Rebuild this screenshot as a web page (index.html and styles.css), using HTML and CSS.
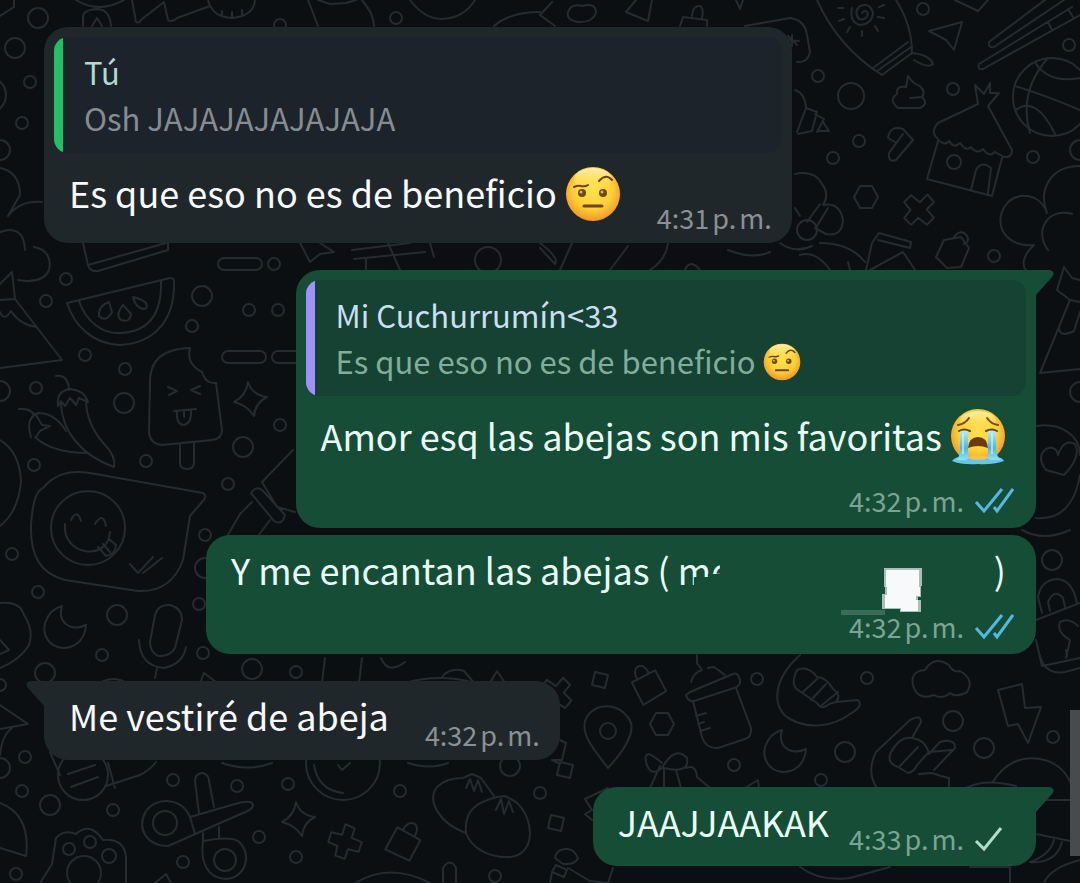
FILE: index.html
```html
<!DOCTYPE html>
<html lang="es">
<head>
    <meta charset="UTF-8">
    <meta name="viewport" content="width=device-width, initial-scale=1.0">
    <title>Chat</title>
    <link rel="stylesheet" href="styles.css">
</head>
<body>
    <svg class="wallpaper" viewBox="0 0 1080 883" preserveAspectRatio="xMidYMin slice" aria-hidden="true">
        <defs>
            <circle id="dot" r="6"/>
            <circle id="ring" r="10"/>
            <path id="star" d="M-2 -17 Q2 -4 17 -2 Q5 4 4 17 Q-3 6 -16 3 Q-4 -3 -2 -17Z"/>
            <path id="hex" d="M-6 -11 H6 L12 0 L6 11 H-6 L-12 0Z"/>
            <path id="cross" d="M-5 -17 L5 -16 L5 -6 L16 -5 L16 5 L5 6 L5 16 L-5 16 L-6 6 L-16 5 L-16 -5 L-5 -6Z"/>
            <path id="moon" d="M-3 -21 C-8 -4 6 5 21 -2 C20 12 11 21 -2 21 C-16 20 -23 8 -20 -4 C-17 -13 -11 -19 -3 -21Z"/>
            <path id="lock" d="M-13 -6 L13 -10 L17 13 L-9 19Z M-7 -7 C-10 -22 5 -24 6 -9"/>
            <path id="diamond" d="M-5 -8 L8 -5 L5 8 L-8 5Z"/>
            <rect id="pill" width="44" height="12" rx="6"/>
        </defs>

        <!-- top edge -->
        <path d="M0 16 L14 7 V0 M76 0 Q98 14 124 0 M83 26 V16 Q84 10 96 9 Q110 9 111 26 M92 26 L97 18 L102 26"/>
        <path d="M132 0 L136 22 Q139 24 142 19 L164 2 L168 20 Q172 23 177 18 L210 6 M208 0 Q212 17 232 18 Q254 16 255 0 M222 16 V11 M232 17 V12 M242 15 V10"/>
        <path d="M308 0 L318 26 M318 0 L330 4 L346 3 L356 0 M362 0 Q374 14 374 26 M410 0 Q424 19 442 19 Q464 18 475 0 M494 26 Q510 12 540 12 M540 15 L555 26 M540 15 L552 2"/>
        <path d="M568 12 Q571 3 582 6 Q596 2 596 13 Q592 23 578 22 Q566 20 568 12Z M626 12 L636 0 M626 12 L648 21 L652 0 M680 26 L683 17 L707 20 V26 M692 16 Q693 5 700 6 Q704 8 702 18 M736 0 L740 9 L743 0"/>
        <path d="M745 26 L790 18 Q805 20 807 35 L810 52 Q808 63 797 62 M792 35 V46 M786 40 L799 41 M788 36 L797 45"/>

        <!-- rocket, plane and chopsticks -->
        <path d="M817 0 Q838 47 882 75 L912 53 Q912 25 896 0 M873 68 L908 42 M877 71 L911 47 M912 53 Q930 55 933 64 Q928 69 914 60"/>
        <path d="M862 13 Q866 8 868 14 Q866 21 859 19 Q853 12 860 6 Q870 2 873 13 Q872 24 860 25 Q849 22 852 8 M862 31 V36 M850 27 L847 32 M844 19 L839 21 M843 8 L838 8 M875 26 L878 31 M878 17 L884 18 M879 7 L884 5"/>
        <path d="M929 31 L962 22 L954 50 L946 40Z M989 42 L1045 0 M994 47 L1064 0 M989 42 Q988 48 994 47 M979 64 L1072 7 M983 69 L1080 15 M979 64 Q977 70 983 69 M1048 22 L1052 30 M1068 9 L1073 17 M955 0 L978 11 L988 0"/>
        <circle cx="1052" cy="97" r="39"/>
        <path d="M1015 86 Q1044 95 1080 110 M1035 62 Q1048 84 1080 78 M1048 58 Q1018 92 1030 133 M1016 110 Q1036 95 1055 134"/>
        <path d="M908 76 Q913 84 920 86 Q926 92 922 97 Q929 104 920 108 H898 Q888 100 897 94 Q896 85 906 87Z M922 97 L910 98"/>

        <!-- hut -->
        <path d="M937 138 Q930 132 938 123 L978 104 L975 85 L984 94 L990 83 L990 93 L999 93 L988 106 L1012 150 Q1012 158 1004 157"/>
        <path d="M937 138 Q944 147 949 141 Q954 149 960 143 Q966 152 971 147 Q977 155 983 149 Q989 158 995 152 L1004 157 M938 141 L927 179 L992 196 L1002 158 M971 190 L976 170 Q982 160 991 168 L988 193"/>
        <circle cx="954" cy="162" r="7"/>

        <path d="M888 138 Q890 125 903 129 L913 140 L896 160 Q888 163 889 153 L903 134 M888 138 L895 142"/>
        <path d="M795 90 Q805 93 806 108 L797 132 M806 108 L817 112 L812 131 L798 134 M815 114 L824 119 L817 132 M823 122 L829 131 L818 131"/>
        <path d="M795 174 Q815 170 822 184 Q830 194 823 205 Q840 202 843 220 Q842 237 826 234 L815 228 M820 204 L807 222 M828 208 L817 226 M795 208 L800 216 M780 243 Q795 254 812 246"/>
        <circle cx="807" cy="230" r="10"/>
        <path d="M866 270 L872 243 L879 233 L911 242 L910 248 L878 240 M870 270 L903 252 L915 270 M820 243 Q850 243 865 262"/>
        <path d="M936 257 L944 240 L961 237 L969 248 L961 267 L947 268Z M954 237 Q961 228 967 236 Q970 242 964 244"/>
        <path d="M1034 245 C1008 248 992 226 1005 206 C1016 190 1040 193 1047 213 M1080 166 C1050 166 1038 190 1047 213 M1072 214 C1049 207 1033 230 1048 250 M1034 245 C1022 256 1022 266 1026 270"/>

        <!-- left column -->
        <path d="M0 168 Q20 172 20 195 L8 216 M42 202 Q20 200 8 216 M0 232 Q24 224 25 250 M34 247 Q53 251 49 270 Q43 284 18 280 M83 243 L88 265 Q90 272 98 271 L168 250 V243 M88 265 L166 243"/>
        <path d="M300 243 L310 262 L320 254 L334 252 L320 243 M352 250 L410 243 M354 259 L425 252 M366 258 V270 M430 243 L434 257 M540 248 L555 264 Q560 258 540 243"/>
        <path d="M0 300 L15 299 L62 360 L0 368 M0 284 L12 272 L15 299 M0 312 Q4 322 11 311 Q20 325 37 327"/>
        <path d="M67 303 L170 278 Q175 277 174 285 C174 320 155 343 120 345 C92 344 74 325 67 303Z M79 301 C86 322 103 334 120 333 C148 332 162 315 161 281"/>
        <path d="M109 302 Q98 306 99 316 Q106 323 112 312Z M123 305 Q115 315 121 320 Q130 323 131 314Z M133 297 Q136 309 145 309 Q152 302 133 297Z"/>
        <path d="M150 385 C149 360 162 349 190 348 Q186 364 202 372 Q205 384 216 383 L222 430 Q222 439 212 440 L162 445 Q150 444 149 432Z M180 445 V463 Q180 469 187 469 Q194 469 194 462 V443"/>
        <path d="M168 387 L177 391 L169 395 M200 386 L191 390 L200 394 M174 411 L196 409 M177 411 Q176 425 184 425 Q192 423 191 410 M184 411 V417"/>
        <path d="M56 376 Q68 374 69 390 M58 406 Q56 391 70 389 Q84 390 88 402 L79 398 L76 405 L70 398 L65 406 L61 401Z M61 404 C62 430 80 455 114 467 Q116 456 105 445 Q86 424 86 400 M19 409 Q31 408 34 415 M31 437 Q25 418 38 413 Q55 413 66 431 M36 415 L42 425 L50 426 L40 431 L36 437 M35 437 Q52 453 88 453"/>
        <path d="M0 440 Q20 452 21 482 Q18 512 0 526"/>
        <path d="M31 525 Q33 492 43 488 C55 474 68 470 90 473 L203 493 Q208 496 202 502 L190 516 L183 560 C175 582 160 592 138 591 L65 580 C42 574 30 558 31 525Z M130 564 L138 573 L153 557 M143 573 L162 558"/>
        <circle cx="88" cy="528" r="37"/>
        <path d="M71 520 Q77 508 81 521 M95 524 Q103 511 106 526 M65 524 C62 556 108 562 110 532 M98 547 L106 556 Q116 554 116 545 L109 539 M103 544 L110 552"/>
        <path d="M293 450 L262 482 L277 507 L295 512 M251 493 Q257 484 264 492 L285 515 Q282 526 274 521Z M252 502 L240 514 L225 540 M270 520 L255 540"/>
        <path d="M0 603 Q20 601 24 615 Q34 630 29 645 Q20 660 0 668 M0 640 L9 650 L0 654"/>
        <path d="M155 615 Q158 604 170 605 Q182 608 182 620 L175 648 Q170 657 158 656 Q150 652 150 642Z M139 640 Q140 666 164 668 Q183 664 186 647 M157 668 L155 678"/>
        <path d="M0 705 L28 724 L0 729 M0 755 Q2 735 12 728 M50 752 L60 775 M108 763 L115 788 M106 786 L140 775 Q150 770 156 762 M68 774 L95 765 M71 787 L98 777 M200 683 L204 673 L216 682 M100 683 Q114 675 126 683"/>
        <circle cx="83" cy="775" r="25"/>
        <path d="M0 803 Q31 815 26 856 L0 848 M40 883 L52 864 L56 838 Q64 829 76 834 Q90 821 103 840 Q124 838 126 857 V883 M155 883 L166 874 L171 883"/>
        <circle cx="69" cy="849" r="6"/><circle cx="90" cy="842" r="6"/><circle cx="109" cy="856" r="7"/><circle cx="84" cy="873" r="17"/>

        <!-- scissors -->
        <circle cx="165" cy="823" r="12"/><circle cx="225" cy="860" r="11"/>
        <path d="M190 817 C182 798 157 796 146 811 C136 829 147 846 168 846 L243 813 Q256 808 252 803 Q248 800 235 804 L190 817 L195 834 M199 813 L195 781 Q195 773 203 773 Q209 775 209 781 L214 807 M203 841 C200 862 207 878 226 879 C246 878 253 853 238 841 Q230 836 203 841 V833 M219 827 V838"/>

        <!-- bottom middle -->
        <circle cx="343" cy="763" r="37"/><path d="M314 765 Q318 790 343 793"/>
        <path d="M338 765 L342 770 L350 763 M325 658 L322 683 M362 658 L359 683 M405 683 Q440 673 475 683 M442 677 Q450 667 464 671 L474 683 M490 683 L497 671 L505 683 M381 658 Q388 675 405 662 M222 763 Q248 772 272 763 M408 763 Q430 770 448 763"/>
        <path d="M466 833 C438 823 427 800 437 787 Q446 778 463 778 L472 774 L481 778 L494 796 M466 788 L470 779 L474 791 L478 780 L482 792 M466 833 C464 810 477 802 497 797 L505 796 L516 802 C536 820 535 855 510 857 C487 858 471 847 466 833 M496 810 L501 799 L504 814 L509 801 L513 812"/>
        <path d="M443 883 V868 Q450 857 456 868 V883 M355 883 Q390 862 430 883 M560 740 L566 743 L562 760 L552 760 M552 760 L560 764"/>

        <!-- bottom right -->
        <path d="M690 692 L733 674 Q738 672 740 680 Q741 686 734 688 L694 701 Q688 702 686 695Z M691 682 Q694 672 702 670 L697 663 V655 M708 668 L714 667 L725 675 M693 701 L702 737 Q706 749 718 748 L745 739 Q752 737 751 728 L736 688 M696 716 L706 713 M698 724 L704 722 M700 731 L710 728"/>
        <path d="M800 655 C770 682 773 710 790 719 C810 730 834 726 850 714 Q864 706 858 700 L836 702 Q842 695 833 689 Q826 677 817 677 Q808 665 797 670 Q790 685 798 690 L817 703 Q822 711 829 704 L836 702 M803 692 L817 679 M811 700 L826 684 M822 705 L838 692"/>
        <path d="M913 685 Q910 671 925 670 Q934 655 949 665 Q953 673 960 671 Q975 680 967 692 Q956 698 950 693 Q942 700 934 695 Q917 701 913 685Z"/>
        <path d="M998 690 L1022 684 L1025 708 L1041 707 L1028 743 L1018 724 L1008 726Z M1040 656 Q1045 675 1065 672 L1080 668 M1067 656 L1066 650"/>
        <path d="M608 768 C590 745 582 734 585 721 C592 701 622 701 631 723 C634 735 622 753 608 768Z M662 763 Q643 746 646 762 Q650 778 662 768 Q675 745 687 758 Q690 774 664 768 M660 766 L650 788 M664 768 L664 788 M676 770 L681 788 M686 768 Q696 764 697 777 L710 788 M745 788 L758 780 L759 788"/>
        <circle cx="608" cy="731" r="8"/>
        <path d="M877 788 Q866 772 876 752 L910 720 Q921 714 921 722 L912 738 Q900 736 891 752 Q886 763 898 767 L908 773 Q914 772 917 765 L929 752 L952 750 M929 754 L940 742 Q955 738 955 748 L934 770 M912 738 Q926 740 929 754 M918 747 L900 766 M919 774 L932 773 Q940 776 949 778 V788"/>
        <path d="M966 788 Q985 778 1016 786 M992 783 Q1010 754 1040 759 Q1064 763 1073 788 M1038 800 H1080 M1036 834 L1080 843 M1054 840 Q1050 855 1030 862 M1062 842 Q1056 864 1030 862 M1080 860 Q1050 868 1044 883 M800 867 Q820 882 850 878 L890 867 M970 867 H1010 V883"/>
        <path d="M585 799 L608 788 M585 799 L592 810 L585 814 L592 820 M555 858 Q556 850 565 849 Q574 848 578 858 Q575 865 563 864Z M556 865 L567 870 L564 877 L552 872 Z M568 868 L590 881 L608 883 L613 868 M552 872 L550 883"/>

        <!-- right column -->
        <path d="M1064 267 L1057 290 L1070 300 L1080 302 M1064 267 L1072 278 L1080 280 M1070 300 L1040 373 L1080 369 M1059 328 Q1060 338 1074 331 L1080 312 M1036 426 C1060 422 1080 435 1080 455 M1036 518 C1060 520 1075 505 1080 475"/>
        <path d="M1064 475 L1046 470 Q1036 457 1046 449 Q1056 445 1058 455 Q1064 438 1075 444 Q1082 456 1064 475Z"/>
        <path d="M1042 613 L1038 597 Q1041 580 1057 579 Q1073 580 1077 604 M1050 611 L1048 602 Q1054 588 1063 598 L1065 607 M1036 620 L1080 603 M1036 640 L1042 666 L1080 658 M1066 658 L1070 640 Q1056 632 1060 622 Q1069 617 1078 626 M1022 530 Q1044 542 1070 530"/>
        <path d="M388 243 L400 270 M560 270 L572 243 M610 270 L628 246 M650 270 Q666 260 668 243 M685 270 Q690 258 700 270 M728 250 Q752 260 770 252 M800 255 Q816 250 830 270 M850 270 L848 262"/>

        <g>
            <use href="#dot" x="30" y="82"/><use href="#dot" x="22" y="123"/><use href="#dot" x="280" y="25"/><use href="#dot" x="396" y="18"/>
            <use href="#dot" x="66" y="279"/><use href="#dot" x="46" y="301"/><use href="#dot" x="274" y="264"/><use href="#dot" x="249" y="310"/>
            <use href="#dot" x="278" y="310"/><use href="#dot" x="192" y="326"/><use href="#dot" x="85" y="355"/><use href="#dot" x="125" y="369"/>
            <use href="#dot" x="36" y="388"/><use href="#dot" x="280" y="425"/><use href="#dot" x="146" y="461"/><use href="#dot" x="34" y="465"/>
            <use href="#dot" x="228" y="484"/><use href="#dot" x="205" y="535"/><use href="#dot" x="12" y="554"/><use href="#dot" x="38" y="592"/>
            <use href="#dot" x="102" y="655"/><use href="#dot" x="199" y="604"/><use href="#dot" x="203" y="653"/><use href="#dot" x="296" y="672"/>
            <use href="#dot" x="25" y="757"/><use href="#dot" x="22" y="791"/><use href="#dot" x="113" y="810"/><use href="#dot" x="173" y="780"/>
            <use href="#dot" x="237" y="786"/><use href="#dot" x="288" y="784"/><use href="#dot" x="259" y="837"/><use href="#dot" x="183" y="862"/>
            <use href="#dot" x="16" y="874"/><use href="#dot" x="296" y="857"/><use href="#dot" x="400" y="791"/><use href="#dot" x="540" y="793"/>
            <use href="#dot" x="495" y="876"/><use href="#dot" x="0" y="685"/><use href="#dot" x="923" y="9"/><use href="#dot" x="1069" y="45"/>
            <use href="#dot" x="818" y="76"/><use href="#dot" x="953" y="89"/><use href="#dot" x="859" y="141"/><use href="#dot" x="833" y="158"/>
            <use href="#dot" x="1033" y="157"/><use href="#dot" x="994" y="256"/><use href="#dot" x="757" y="679"/><use href="#dot" x="867" y="678"/>
            <use href="#dot" x="734" y="765"/><use href="#dot" x="821" y="780"/><use href="#dot" x="1053" y="737"/>
        </g>
        <g>
            <use href="#ring" x="38" y="18"/><use href="#ring" x="15" y="48"/><use href="#ring" x="0" y="150"/><use href="#ring" x="202" y="296"/>
            <use href="#ring" x="0" y="391"/><use href="#ring" x="124" y="403"/><use href="#ring" x="243" y="447"/><use href="#ring" x="117" y="615"/>
            <use href="#ring" x="45" y="673"/><use href="#ring" x="252" y="669"/><use href="#ring" x="205" y="568"/><use href="#ring" x="0" y="768"/>
            <use href="#ring" x="50" y="805"/><use href="#ring" x="510" y="766"/><use href="#ring" x="845" y="752"/><use href="#ring" x="953" y="721"/>
            <use href="#ring" x="984" y="748"/><use href="#ring" x="1080" y="392"/><use href="#ring" x="1052" y="560"/><use href="#ring" x="1080" y="150"/>
            <circle cx="851" cy="96" r="13"/><circle cx="488" cy="260" r="13"/><circle cx="-12" cy="95" r="18"/>
        </g>
        <use href="#pill" x="218" y="258"/><use href="#pill" x="222" y="351"/><use href="#pill" x="272" y="351"/>
        <use href="#star" x="250" y="399"/><use href="#star" x="298" y="819"/>
        <use href="#moon" x="65" y="627"/><use href="#moon" x="785" y="751"/>
        <use href="#hex" x="866" y="197"/><use href="#hex" x="662" y="724"/>
        <use href="#diamond" x="600" y="680"/><use href="#diamond" x="565" y="770"/><use href="#diamond" x="556" y="823"/>
        <use href="#lock" transform="translate(646 684) rotate(-18)"/>
        <use href="#cross" transform="translate(919 210) rotate(45)"/>
        <use href="#cross" transform="translate(345 842) rotate(18)"/>
        <use href="#cross" transform="translate(556 694) rotate(40)"/>
        <use href="#lock" transform="translate(404 840) rotate(38)"/>
    </svg>

    <!-- shared icons -->
    <svg class="sprite" width="0" height="0" aria-hidden="true">
        <defs>
            <radialGradient id="face" cx="50%" cy="42%" r="60%">
                <stop offset="0" stop-color="#ffe04e"/>
                <stop offset="0.6" stop-color="#ffd036"/>
                <stop offset="1" stop-color="#ee8f28"/>
            </radialGradient>
            <linearGradient id="shine" x1="0" y1="0" x2="0" y2="1">
                <stop offset="0" stop-color="#fff3c0" stop-opacity="0.9"/>
                <stop offset="1" stop-color="#ffe65c" stop-opacity="0"/>
            </linearGradient>
            <linearGradient id="tears" x1="0" y1="0" x2="0" y2="1">
                <stop offset="0" stop-color="#b4efff"/>
                <stop offset="0.6" stop-color="#4cb7e2"/>
                <stop offset="1" stop-color="#8fe2f7"/>
            </linearGradient>
        </defs>
        <symbol id="eyebrow" viewBox="0 0 56 56">
            <circle cx="28" cy="28" r="27" fill="url(#face)"/>
            <ellipse cx="28" cy="13" rx="19" ry="11" fill="url(#shine)"/>
            <ellipse cx="17" cy="27" rx="4" ry="4" fill="#6b4a10"/>
            <ellipse cx="38" cy="27" rx="4" ry="4" fill="#6b4a10"/>
            <circle cx="16" cy="26" r="1.5" fill="#d9b65a"/>
            <circle cx="37" cy="26" r="1.5" fill="#d9b65a"/>
            <path d="M9 21 Q13 19 16 20 Q20 21 23 19 M34 15 Q41 7 47 14" fill="none" stroke="#6b4410" stroke-width="2" stroke-linecap="round"/>
            <path d="M19 40 H37" stroke="#6b4410" stroke-width="3" stroke-linecap="round"/>
        </symbol>
        <symbol id="crying" viewBox="0 0 56 56">
            <circle cx="28" cy="27" r="27" fill="url(#face)"/>
            <ellipse cx="28" cy="11" rx="18" ry="9" fill="url(#shine)"/>
            <path d="M8 16 Q15 15 19 9 M48 16 Q41 15 37 9" fill="none" stroke="#7a4a12" stroke-width="2" stroke-linecap="round"/>
            <path d="M2 52 Q5 48 10 48 H46 Q52 48 54 52 Q42 56 28 55 Q12 56 2 52Z" fill="#62c7ea"/>
            <path d="M18 48 Q28 45 39 48 Q36 51 28 51 Q20 51 18 48Z" fill="#f7c34a"/>
            <path d="M10 21 L18 21 L18 46 Q21 50 15 51 L6 51 Q10 47 10 42Z M38 21 L46 21 L46 42 Q47 48 51 51 L41 51 Q36 50 38 46Z" fill="url(#tears)"/>
            <path d="M13 24 V45 M42 24 V45" stroke="#d5f6ff" stroke-width="2" opacity="0.6"/>
            <path d="M9 22 Q14 19 20 22 M36 22 Q42 19 47 22" fill="none" stroke="#6b4410" stroke-width="2" stroke-linecap="round"/>
            <path d="M18 39 Q19 28 28 28 Q37 28 38 39 Q28 35 18 39Z" fill="#6e3a0c"/>
        </symbol>
        <symbol id="double-check" viewBox="0 0 40 28">
            <path d="M2 15 L10 24 L28 2 M20 20 L23 24 L39 2" fill="none" stroke="currentColor" stroke-width="3"/>
        </symbol>
        <symbol id="check" viewBox="0 0 40 28">
            <path d="M2 16 L10 24 L27 3" fill="none" stroke="currentColor" stroke-width="3"/>
        </symbol>
        <symbol id="tail" viewBox="0 0 28 30">
            <path d="M0 0 H24 Q30 2 26 7 L10 25 V30 H0Z" fill="currentColor"/>
        </symbol>
    </svg>

    <main class="chat">
        <article class="bubble incoming">
            <blockquote class="quote">
                <p class="quote-name">Tú</p>
                <p class="quote-text">Osh JAJAJAJAJAJAJA</p>
            </blockquote>
            <div class="row">
                <p class="text">Es que eso no es de beneficio <svg class="emoji" role="img" aria-label="ceja levantada"><use href="#eyebrow"/></svg></p>
                <footer class="meta"><time>4:31&#8239;p.&#8239;m.</time></footer>
            </div>
        </article>

        <article class="bubble outgoing has-tail">
            <svg class="tail" aria-hidden="true"><use href="#tail"/></svg>
            <blockquote class="quote">
                <p class="quote-name">Mi Cuchurrumín&lt;33</p>
                <p class="quote-text">Es que eso no es de beneficio <svg class="emoji" role="img" aria-label="ceja levantada"><use href="#eyebrow"/></svg></p>
            </blockquote>
            <div class="row stacked">
                <p class="text">Amor esq las abejas son mis favoritas <svg class="emoji" role="img" aria-label="llorando"><use href="#crying"/></svg></p>
                <footer class="meta"><time>4:32&#8239;p.&#8239;m.</time><svg class="ticks read" role="img" aria-label="leído"><use href="#double-check"/></svg></footer>
            </div>
        </article>

        <article class="bubble outgoing grouped">
            <div class="row stacked">
                <p class="text">Y me encantan las abejas ( <span class="hidden-part"><span class="cut">me</span><svg class="smudge" viewBox="0 0 84 50" aria-hidden="true">
                    <path d="M0 42 H44 V47 H0Z" fill="#3d6b59"/>
                    <path d="M43 0 H81 V18 H80 V29 H77 V32 H80 V44 H59 V41 H41 V26 H44 V19 H43Z" fill="#a9c0b7"/>
                    <path d="M45 2 H78 V19 H79 V28 H75 V32 H77 V43 H60 V40 H44 V27 H46 V19 H45Z" fill="#f7f9fa"/>
                </svg></span>)</p>
                <footer class="meta"><time>4:32&#8239;p.&#8239;m.</time><svg class="ticks read" role="img" aria-label="leído"><use href="#double-check"/></svg></footer>
            </div>
        </article>

        <article class="bubble incoming has-tail">
            <svg class="tail" aria-hidden="true"><use href="#tail"/></svg>
            <div class="row">
                <p class="text">Me vestiré de abeja</p>
                <footer class="meta"><time>4:32&#8239;p.&#8239;m.</time></footer>
            </div>
        </article>

        <article class="bubble outgoing has-tail">
            <svg class="tail" aria-hidden="true"><use href="#tail"/></svg>
            <div class="row">
                <p class="text">JAAJJAAKAK</p>
                <footer class="meta"><time>4:33&#8239;p.&#8239;m.</time><svg class="ticks" role="img" aria-label="enviado"><use href="#check"/></svg></footer>
            </div>
        </article>
    </main>

    <div class="scroll-thumb"></div>
</body>
</html>
```

FILE: styles.css
```css
* { box-sizing: border-box; }
body { margin: 0; position: relative; min-height: 100vh; overflow: hidden; background: #0b0f12; font-family: "Noto Sans CJK SC", "Noto Sans", sans-serif; }
p, blockquote { margin: 0; }

.wallpaper { position: absolute; top: 0; left: 0; width: 100%; height: 100%; fill: none; stroke: #252b2e; stroke-width: 2; stroke-linejoin: round; stroke-linecap: round; }
.sprite { position: absolute; }

.chat { position: relative; display: flex; flex-direction: column; align-items: flex-start; gap: 27px; padding: 27px 44px 16px; }

.bubble { position: relative; max-width: 84%; border-radius: 24px; padding: 10px; }
.incoming { background: #20272a; color: #f7fafc; }
.outgoing { align-self: flex-end; background: #154d37; color: #e9fff5; padding-bottom: 12px; }
.grouped { margin-top: -20px; }
.outgoing.has-tail { border-top-right-radius: 0; }
.incoming.has-tail { border-top-left-radius: 0; }

.tail { position: absolute; top: 0; width: 28px; height: 30px; }
.outgoing .tail { right: -18px; color: #154d37; }
.incoming .tail { left: -18px; color: #20272a; transform: scaleX(-1); }

.quote { height: 116px; padding: 12px 21px 12px 30px; border-radius: 14px; background: linear-gradient(to right, #21c063 9px, #1c232b 9px); font-size: 31px; line-height: 46px; }
.quote-name { color: #b0dccb; }
.quote-text { color: #868d91; }
.outgoing .quote { background: linear-gradient(to right, #a390fa 9px, #154232 9px); }
.outgoing .quote-name { color: #cbdff0; }
.outgoing .quote-text { color: #82ad9a; }

.row { display: flex; align-items: flex-end; gap: 36px; padding: 0 10px 0 15px; }
.outgoing .row { gap: 20px; padding-right: 12px; }
.text { font-size: 36px; line-height: 54px; margin-top: -3px; padding-bottom: 8px; white-space: nowrap; }
.outgoing .text { padding-bottom: 6px; }
.quote + .row .text { margin-top: 12px; padding-bottom: 11px; }
.outgoing .stacked { flex-direction: column; gap: 10px; }
.stacked .text { padding-right: 8px; }

.meta { display: flex; align-items: center; gap: 10px; color: #899195; font-size: 27px; line-height: 30px; white-space: nowrap; }
.outgoing .meta { color: #7ba493; }
.ticks { width: 40px; height: 28px; color: #b4dccb; }
.ticks.read { color: #53b9e3; }

.emoji { width: 56px; height: 56px; vertical-align: -14px; }
.quote .emoji { width: 38px; height: 38px; vertical-align: -7px; }

.hidden-part { position: relative; display: inline-block; width: 316px; }
.cut { display: inline-block; clip-path: polygon(0 0, 42px 0, 42px 32px, 30px 32px, 30px 35px, 16px 35px, 16px 100%, 0 100%); }
.smudge { position: absolute; right: 69px; top: 26px; width: 84px; height: 50px; }

.scroll-thumb { position: absolute; right: 0; top: 710px; width: 10px; height: 146px; background: #484b4e; }
```
